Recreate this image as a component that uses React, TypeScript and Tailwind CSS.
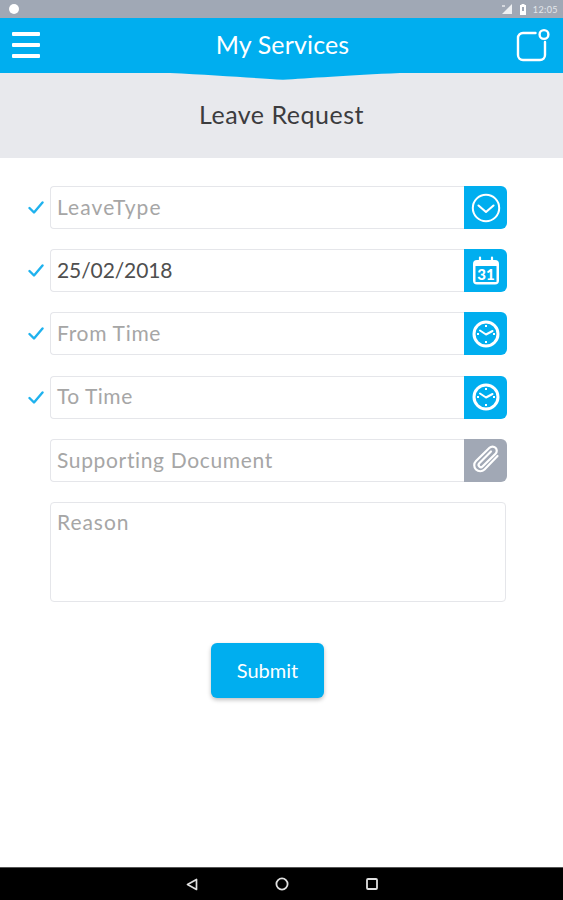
const BLUE = "bg-[#00aeef]";

const ChevronCircle = () => (
  <svg width="30" height="30" viewBox="0 0 30 30" fill="none" stroke="white">
    <circle cx="15" cy="15" r="13.2" strokeWidth="2" />
    <path d="M7.5 12.5 L15 19 L22.5 12.5" strokeWidth="2.1" strokeLinecap="round" strokeLinejoin="round" />
  </svg>
);

const CalendarIcon = () => (
  <svg width="28" height="29" viewBox="0 0 28 29" fill="none">
    <rect x="1" y="4" width="26" height="24.5" rx="4" fill="white" />
    <rect x="3.5" y="10" width="21" height="16" rx="0.5" fill="#00aeef" />
    <path d="M8 1.5 V7 M20 1.5 V7" stroke="white" strokeWidth="2.2" strokeLinecap="round" />
    <text x="14" y="24" textAnchor="middle" fontSize="15" fontWeight="900" fill="white" fontFamily="Lato, sans-serif">31</text>
  </svg>
);

const ClockIcon = () => (
  <svg width="30" height="30" viewBox="0 0 30 30" fill="none" stroke="white">
    <circle cx="15" cy="15" r="12" strokeWidth="3" />
    <path d="M15 6 V8 M15 22 V24 M6 15 H8 M22 15 H24" strokeWidth="2" />
    <path d="M9 11.5 L15 15.5 L21.5 12" strokeWidth="2" strokeLinecap="round" strokeLinejoin="round" />
  </svg>
);

const ClipIcon = () => (
  <svg width="32" height="32" viewBox="0 0 32 32" fill="none" stroke="white" strokeWidth="2.2" strokeLinecap="round" strokeLinejoin="round">
    <path d="M27.5 12 L14.5 25.5 a6 6 0 0 1 -8.5 -8.5 L19.5 3.8 a4.2 4.2 0 0 1 6 6 L12.5 22.5 a2.2 2.2 0 0 1 -3.2 -3.2 L21 7.5" />
  </svg>
);

const Check = () => (
  <svg width="16" height="13" viewBox="0 0 16 13" fill="none" stroke="#1fb2ee" strokeWidth="2.4" strokeLinecap="round" strokeLinejoin="round">
    <path d="M1.5 7 L6 11.5 L14.5 1.5" />
  </svg>
);

const Field = ({
  label,
  textClass,
  checked,
  tail,
  gray,
}: {
  label: string;
  textClass: string;
  checked?: boolean;
  tail: React.ReactNode;
  gray?: boolean;
}) => (
  <div className="flex items-center">
    <div className="w-[50px] pl-[28px] flex items-center">{checked && <Check />}</div>
    <div className="w-[457px] h-[43px] flex items-stretch">
      <div
        className={`flex-1 flex items-center pl-[6px] pb-[2px] text-[21px] border border-r-0 border-[#e5e6ea] rounded-l-[4px] bg-white ${textClass}`}
      >
        {label}
      </div>
      <div
        className={`w-[43px] flex items-center justify-center rounded-r-[6px] ${
          gray ? "bg-[#a1a8b5]" : BLUE
        }`}
      >
        {tail}
      </div>
    </div>
  </div>
);

export default function App() {
  return (
    <div className="w-[563px] h-[900px] flex flex-col bg-white font-['Lato',sans-serif] overflow-hidden">
      {/* status bar */}
      <div className="h-[18px] bg-[#a0a8b5] flex items-center justify-between pl-[9px] pr-[5px]">
        <div className="w-[10px] h-[10px] rounded-full bg-white" />
        <div className="flex items-center gap-[7px]">
          <svg width="11" height="10" viewBox="0 0 11 10">
            <path d="M0 10 L10 0 V10 Z" fill="#eef0f2" />
            <path d="M0 1 H3 V3 H0 Z" fill="#d5d8de" />
          </svg>
          <svg width="6" height="11" viewBox="0 0 6 11">
            <path d="M1.5 0 H4.5 V1 H6 V11 H0 V1 H1.5 Z" fill="white" />
            <rect x="2" y="3" width="2" height="4" fill="#a0a8b5" />
          </svg>
          <span className="text-[9px] leading-none text-[#e4e7eb] tracking-[0.4px]">12:05</span>
        </div>
      </div>

      {/* header */}
      <div className={`relative h-[55px] ${BLUE} flex items-center justify-between pl-[12px] pr-[13px]`}>
        <div className="flex flex-col gap-[7px] mt-[-1px]">
          <div className="w-[28px] h-[4px] rounded-[1px] bg-white" />
          <div className="w-[28px] h-[4px] rounded-[1px] bg-white" />
          <div className="w-[28px] h-[4px] rounded-[1px] bg-white" />
        </div>
        <span className="text-white text-[25px] tracking-[0.15px] pl-[9px] pb-[2px]">My Services</span>
        <svg width="34" height="36" viewBox="0 0 34 36" fill="none" stroke="white" strokeWidth="2.4" className="mt-[-2px]">
          <path d="M19.5 6 H7 a5 5 0 0 0 -5 5 V28 a5 5 0 0 0 5 5 H24 a5 5 0 0 0 5 -5 V15" strokeLinecap="round" />
          <circle cx="28" cy="7.5" r="4.4" strokeWidth="2.4" />
        </svg>
        <svg className="absolute left-0 top-full" width="563" height="7" viewBox="0 0 563 7">
          <path d="M170 0 C215 2 260 5.5 283 6.8 C306 5.5 350 2 400 0 Z" fill="#00aeef" />
        </svg>
      </div>

      {/* title */}
      <div className="h-[85px] bg-[#e8e9ed] flex items-center justify-center pb-[2px] text-[25px] text-[#3c3c3e] tracking-[0.5px]">
        Leave Request
      </div>

      {/* form */}
      <div className="flex-1 flex flex-col pt-[28px]">
        <div className="flex flex-col gap-[20.2px]">
          <Field label="LeaveType" textClass="text-[#a6a6a6] tracking-[1.1px]" checked tail={<ChevronCircle />} />
          <Field label="25/02/2018" textClass="text-[#4f4f4f] tracking-[-0.1px]" checked tail={<CalendarIcon />} />
          <Field label="From Time" textClass="text-[#a6a6a6] tracking-[0.7px]" checked tail={<ClockIcon />} />
          <Field label="To Time" textClass="text-[#a6a6a6] tracking-[0.5px]" checked tail={<ClockIcon />} />
          <Field label="Supporting Document" textClass="text-[#a6a6a6] tracking-[0.65px]" gray tail={<ClipIcon />} />
          <div className="pl-[50px]">
            <div className="w-[456px] h-[100px] border border-[#e5e6ea] rounded-[4px] pl-[6px] pt-[5px] text-[21px] leading-[28px] tracking-[0.95px] text-[#a6a6a6]">
              Reason
            </div>
          </div>
        </div>
        <div className="pl-[211px] pt-[41px]">
          <button className={`w-[113px] h-[55px] pb-[1px] rounded-[6px] ${BLUE} text-white text-[20px] shadow-[0_2px_4px_rgba(0,0,0,0.25)]`}>
            Submit
          </button>
        </div>
      </div>

      {/* nav bar */}
      <div className="h-[33px] bg-black border-t border-[#555] flex items-center relative">
        <div className="w-full flex items-center justify-between pl-[186px] pr-[185px]">
          <svg width="12" height="13" viewBox="0 0 12 13" fill="none" stroke="#e0e0e0" strokeWidth="1.7" strokeLinejoin="round">
            <path d="M10.5 1.5 V11.5 L1.5 6.5 Z" />
          </svg>
          <svg width="14" height="14" viewBox="0 0 14 14" fill="none" stroke="#e0e0e0" strokeWidth="1.8">
            <circle cx="7" cy="7" r="5.6" />
          </svg>
          <svg width="12" height="12" viewBox="0 0 12 12" fill="none" stroke="#e0e0e0" strokeWidth="1.8">
            <rect x="1" y="1" width="10" height="10" rx="1" />
          </svg>
        </div>
      </div>
    </div>
  );
}
